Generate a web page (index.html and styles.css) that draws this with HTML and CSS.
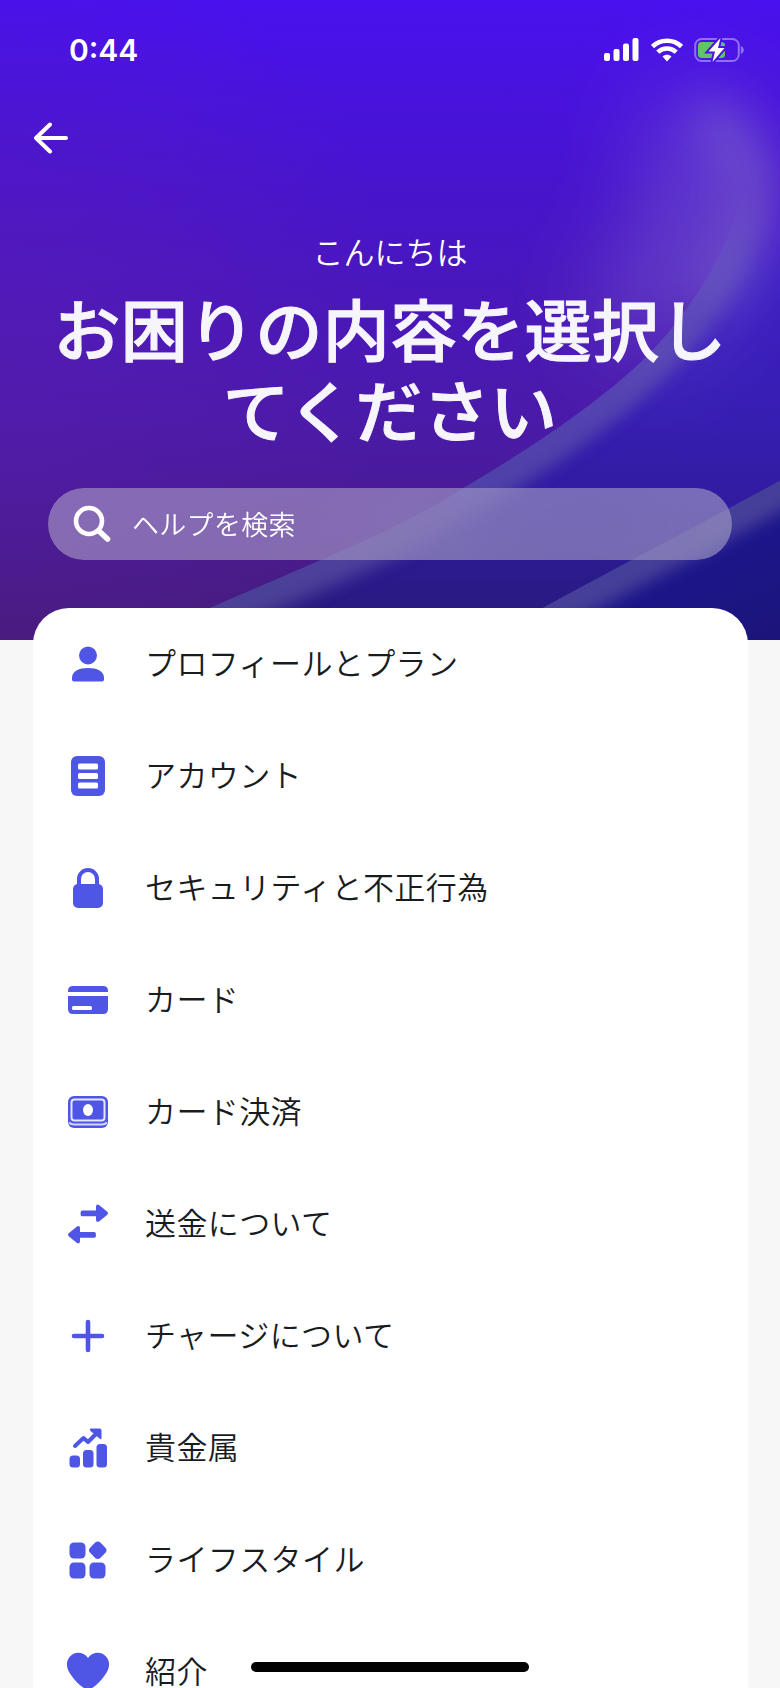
FILE: index.html
```html
<!DOCTYPE html>
<html lang="ja">
<head>
    <meta charset="UTF-8">
    <title>ヘルプ</title>
    <link rel="stylesheet" href="styles.css">
</head>
<body>
    <div class="screen">
        <header class="hero">
            <svg class="hero-bg" viewBox="0 0 780 640" preserveAspectRatio="none">
                <defs>
                    <linearGradient id="base" x1="0" y1="0" x2="0" y2="1">
                        <stop offset="0" stop-color="#4911ee"/>
                        <stop offset=".3" stop-color="#4814cc"/>
                        <stop offset=".65" stop-color="#4a1aa9"/>
                        <stop offset="1" stop-color="#471c7a"/>
                    </linearGradient>
                    <radialGradient id="warm" gradientUnits="userSpaceOnUse" cx="0" cy="320" r="400">
                        <stop offset="0" stop-color="#6020b0" stop-opacity=".38"/>
                        <stop offset="1" stop-color="#6020b0" stop-opacity="0"/>
                    </radialGradient>
                    <linearGradient id="outer" gradientUnits="userSpaceOnUse" x1="0" y1="0" x2="0" y2="640">
                        <stop offset=".3" stop-color="#4519d8" stop-opacity="0"/>
                        <stop offset=".42" stop-color="#3e1cc6"/>
                        <stop offset=".65" stop-color="#371eb2"/>
                        <stop offset=".8" stop-color="#2f1b9e"/>
                        <stop offset="1" stop-color="#271a78"/>
                    </linearGradient>
                    <linearGradient id="corner" gradientUnits="userSpaceOnUse" x1="640" y1="540" x2="700" y2="680">
                        <stop offset="0" stop-color="#1d1592"/>
                        <stop offset="1" stop-color="#1b1578"/>
                    </linearGradient>
                    <linearGradient id="fade" gradientUnits="userSpaceOnUse" x1="0" y1="190" x2="0" y2="350">
                        <stop offset="0" stop-color="#fff" stop-opacity="0"/>
                        <stop offset="1" stop-color="#fff"/>
                    </linearGradient>
                    <mask id="fade-top"><rect width="780" height="640" fill="url(#fade)"/></mask>
                    <filter id="soft" x="-10%" y="-10%" width="120%" height="120%"><feGaussianBlur stdDeviation="8"/></filter>
                    <filter id="haze" x="-150%" y="-60%" width="400%" height="220%"><feGaussianBlur stdDeviation="22"/></filter>
                    <filter id="wide" x="-150%" y="-100%" width="400%" height="300%"><feGaussianBlur stdDeviation="48"/></filter>
                    <clipPath id="outside"><path d="M170 625C300 568 400 530 465 487C540 443 600 400 640 363C690 315 735 240 742 190C750 130 700 80 600 50V0H780V640H130Z"/></clipPath>
                    <clipPath id="below"><path d="M500 632C600 575 700 525 790 475V640H490Z"/></clipPath>
                </defs>
                <rect width="780" height="640" fill="url(#base)"/>
                <rect width="780" height="640" fill="url(#warm)"/>
                <path d="M170 625C300 568 400 530 465 487C540 443 600 400 640 363C690 315 735 240 742 190C750 130 700 80 600 50V0H780V640H130Z" fill="url(#outer)"/>
                <path d="M660 130Q735 160 715 210T620 330" fill="none" stroke="#8a74d0" stroke-opacity=".5" stroke-width="90" filter="url(#wide)"/>
                <path d="M715 120C745 150 758 180 750 210S730 265 715 290" fill="none" stroke="#8a7ac4" stroke-opacity=".42" stroke-width="38" stroke-linecap="round" filter="url(#haze)"/>
                <g clip-path="url(#outside)" mask="url(#fade-top)">
                    <path d="M170 625C300 568 400 530 465 487C540 443 600 400 640 363C690 315 735 240 742 190" fill="none" stroke="#746cac" stroke-opacity=".46" stroke-width="56" filter="url(#soft)"/>
                </g>
                <g clip-path="url(#below)">
                    <rect width="780" height="640" fill="url(#corner)"/>
                    <path d="M480 642C600 575 700 525 800 470" fill="none" stroke="#6660a0" stroke-opacity=".56" stroke-width="54" filter="url(#soft)"/>
                </g>
            </svg>

            <div class="status-bar">
                <span class="time">0:44</span>
                <div class="status-icons">
                    <svg width="36" height="24" viewBox="0 0 36 24" fill="#fff">
                        <rect x="0" y="15" width="6" height="8" rx="2"/>
                        <rect x="9.500" y="11" width="6" height="12" rx="2"/>
                        <rect x="19" y="5.500" width="6" height="17.500" rx="2"/>
                        <rect x="28.500" y="0" width="6" height="23" rx="2"/>
                    </svg>
                    <svg width="32" height="24" viewBox="0 0 32 24" fill="none" stroke="#fff" stroke-width="4.600">
                        <path d="M1.500 8.500C9.500 .800 22.500 .800 30.500 8.500"/>
                        <path d="M6.800 14.200C12 9.200 20 9.200 25.200 14.200"/>
                        <path d="M11.500 18.500C14 16.200 18 16.200 20.500 18.500L16 23.500Z" fill="#fff" stroke="none"/>
                    </svg>
                    <svg width="50" height="26" viewBox="0 0 50 26">
                        <rect x="1.200" y="2" width="43.600" height="22" rx="6.500" fill="none" stroke="#9070f4" stroke-width="2"/>
                        <path d="M46.800 9C50.800 10.500 50.800 15.500 46.800 17Z" fill="#9070f4"/>
                        <rect x="4" y="5" width="27" height="16" rx="3.500" fill="#62c466"/>
                        <path d="M26.500 1L14.500 14.500H21L18.500 25L30.500 11H24Z" fill="#fff" stroke="#4a14e2" stroke-width="4" paint-order="stroke"/>
                    </svg>
                </div>
            </div>

            <button class="back" aria-label="戻る">
                <svg width="36" height="32" viewBox="0 0 36 32" fill="none" stroke="#fff" stroke-width="4" stroke-linecap="round" stroke-linejoin="round">
                    <path d="M16 2.500L2 16L16 29.500M3 16H32"/>
                </svg>
            </button>

            <p class="greeting">こんにちは</p>
            <h1>お困りの内容を選択し<br>てください</h1>

            <div class="search">
                <svg width="38" height="38" viewBox="0 0 38 38" fill="none" stroke="#fff" stroke-width="4.600" stroke-linecap="round">
                    <circle cx="16" cy="16" r="13"/>
                    <path d="M26 26L34.500 34" stroke-width="5.500"/>
                </svg>
                <span>ヘルプを検索</span>
            </div>
        </header>

        <ul class="menu">
            <li>
                <svg viewBox="0 0 48 48">
                    <circle cx="24" cy="15.500" r="9"/>
                    <path d="M8 38C8 31 15 28 24 28S40 31 40 38V39.500Q40 41.500 38 41.500H10Q8 41.500 8 39.500Z"/>
                </svg>
                <span>プロフィールとプラン</span>
            </li>
            <li>
                <svg viewBox="0 0 48 48">
                    <rect x="7" y="4" width="34" height="40" rx="6"/>
                    <g fill="#fff">
                        <rect x="14" y="11.500" width="20" height="6" rx="1.500"/>
                        <rect x="14" y="21" width="20" height="6" rx="1.500"/>
                        <rect x="14" y="30.500" width="20" height="6" rx="1.500"/>
                    </g>
                </svg>
                <span>アカウント</span>
            </li>
            <li>
                <svg viewBox="0 0 48 48">
                    <rect x="9" y="20" width="30" height="24" rx="5"/>
                    <path d="M15 22V15A9 9 0 0 1 33 15V22" fill="none" stroke="#4f55e5" stroke-width="4"/>
                </svg>
                <span>セキュリティと不正行為</span>
            </li>
            <li>
                <svg viewBox="0 0 48 48">
                    <path d="M4 16V15Q4 10 9 10H39Q44 10 44 15V16Z"/>
                    <path d="M4 20H44V33Q44 38 39 38H9Q4 38 4 33Z"/>
                    <rect x="8" y="30" width="20" height="4" rx="1.500" fill="#fff"/>
                </svg>
                <span>カード</span>
            </li>
            <li>
                <svg viewBox="0 0 48 48">
                    <rect x="4" y="8" width="40" height="32" rx="6"/>
                    <rect x="7.500" y="11.500" width="33" height="21" rx="3" fill="none" stroke="#e4e5ff" stroke-width="2"/>
                    <path d="M5 34.500Q7 36.500 10 36.500H38Q41 36.500 43 34.500" fill="none" stroke="#d5d7ff" stroke-width="2"/>
                    <ellipse cx="24" cy="22" rx="5" ry="6" fill="#fff"/>
                </svg>
                <span>カード決済</span>
            </li>
            <li>
                <svg viewBox="0 0 48 48">
                    <path d="M18 10.500H32V7Q32 3.500 35 5L43 11.500Q45 13.200 43 15L35 21.500Q32 23 32 19.500V16.300H18Q16.500 16.300 16.500 13.400T18 10.500Z"/>
                    <path d="M30.500 32H16V28.500Q16 25 13 26.500L5 33Q3 34.700 5 36.500L13 43Q16 44.500 16 41V37.800H30.500Q32 37.800 32 34.900T30.500 32Z"/>
                </svg>
                <span>送金について</span>
            </li>
            <li>
                <svg viewBox="0 0 48 48">
                    <path d="M24 10V38M10 24H38" fill="none" stroke="#4f55e5" stroke-width="4.600" stroke-linecap="round"/>
                </svg>
                <span>チャージについて</span>
            </li>
            <li>
                <svg viewBox="0 0 48 48">
                    <rect x="5.500" y="31.500" width="10.500" height="12" rx="3.500"/>
                    <rect x="19" y="26" width="10.500" height="17.500" rx="3.500"/>
                    <rect x="32.500" y="20" width="10.500" height="23.500" rx="3.500"/>
                    <path d="M11 22L19.500 14L24 18L33 9" fill="none" stroke="#4f55e5" stroke-width="4" stroke-linecap="round" stroke-linejoin="round"/>
                    <path d="M27 4.500H35.500Q37.500 4.500 37.500 6.500V14Q37.300 16 35.500 14.600L26.500 7Q25 5 27 4.500Z"/>
                </svg>
                <span>貴金属</span>
            </li>
            <li>
                <svg viewBox="0 0 48 48">
                    <rect x="5.500" y="6.500" width="16" height="16" rx="4.500"/>
                    <rect x="26.500" y="7" width="14.500" height="14.500" rx="4" transform="rotate(45 33.750 14.250)"/>
                    <rect x="5.500" y="26.500" width="16" height="16" rx="4.500"/>
                    <rect x="25.500" y="26.500" width="16" height="16" rx="4.500"/>
                </svg>
                <span>ライフスタイル</span>
            </li>
            <li>
                <svg viewBox="0 0 48 48">
                    <path d="M24 10C19 3 10 3.500 5.500 9C1 15 3 22 7 27C12 34 18 40 24 42C30 40 36 34 41 27C45 22 47 15 42.500 9C38 3.500 29 3 24 10Z"/>
                </svg>
                <span>紹介</span>
            </li>
        </ul>

        <div class="home-indicator"></div>
    </div>
</body>
</html>
```
FILE: styles.css
```css
* {
    box-sizing: border-box;
}

body {
    margin: 0;
    background: #f7f7f7;
    font-family: "Noto Sans CJK JP", "Noto Sans", sans-serif;
}

.screen {
    position: relative;
    width: 780px;
    height: 1688px;
    overflow: hidden;
}

.hero {
    position: relative;
    height: 640px;
    color: #fff;
    isolation: isolate;
}

.hero-bg {
    position: absolute;
    inset: 0;
    width: 100%;
    height: 100%;
    z-index: -1;
}

.status-bar {
    display: flex;
    justify-content: space-between;
    align-items: center;
    height: 99px;
    padding: 0 36px 0 69px;
}

.time {
    font-family: Inter, sans-serif;
    font-size: 30px;
    font-weight: 600;
}

.status-icons {
    display: flex;
    align-items: center;
    gap: 11px;
}

.back {
    display: block;
    height: 32px;
    margin: 23px 0 0 34px;
    padding: 0;
    border: none;
    background: none;
}

.back svg {
    display: block;
}

.greeting {
    margin: 74px 0 0;
    font-size: 31px;
    line-height: 46px;
    font-weight: 350;
    text-align: center;
}

h1 {
    margin: 12px 0 0;
    color: #f7f5fc;
    font-size: 67px;
    line-height: 81px;
    letter-spacing: 0.3px;
    font-weight: 500;
    -webkit-text-stroke: 1px #f7f5fc;
    text-align: center;
}

.search {
    display: flex;
    align-items: center;
    gap: 21px;
    height: 72px;
    margin: 40px 48px 0;
    padding-left: 25px;
    border-radius: 36px;
    background: rgba(200, 196, 212, 0.47);
    backdrop-filter: blur(50px);
    font-size: 27px;
    letter-spacing: 0.3px;
    font-weight: 350;
}

.search span {
    padding-bottom: 2px;
}

.menu {
    position: relative;
    margin: -32px 32px 0 33px;
    padding: 0;
    list-style: none;
    background: #fff;
    border-radius: 36px 36px 0 0;
}

.menu li {
    display: flex;
    align-items: center;
    gap: 33px;
    height: 112px;
    padding-left: 31px;
    color: #191c1f;
    font-size: 31px;
    letter-spacing: 0.4px;
    font-weight: 350;
}

.menu span {
    padding-bottom: 5px;
}

.menu svg {
    width: 48px;
    height: 48px;
    fill: #4f55e5;
}

.home-indicator {
    position: absolute;
    left: 251px;
    bottom: 16px;
    width: 278px;
    height: 10px;
    border-radius: 5px;
    background: #000;
}
```
